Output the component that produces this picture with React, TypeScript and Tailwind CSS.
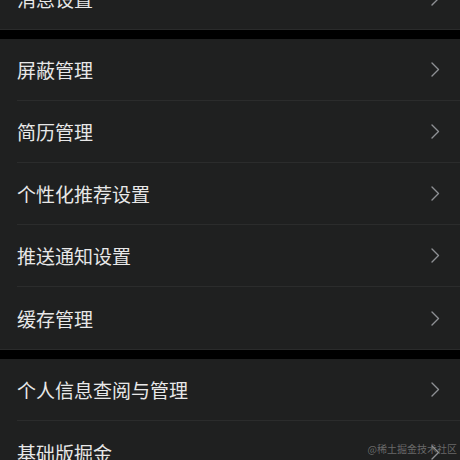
const sections: string[][] = [
  ["消息设置"],
  ["屏蔽管理", "简历管理", "个性化推荐设置", "推送通知设置", "缓存管理"],
  ["个人信息查阅与管理", "基础版掘金"],
];

function Chevron() {
  return (
    <svg width="9" height="15" viewBox="0 0 9 15" fill="none" className="text-[#8e9094]">
      <polyline
        points="1,1 7.5,7.5 1,14"
        stroke="currentColor"
        strokeWidth="1.4"
        strokeLinecap="round"
        strokeLinejoin="round"
      />
    </svg>
  );
}

function Row({ label, last }: { label: string; last: boolean }) {
  return (
    <div className="flex h-[62px] items-stretch pl-[17px]">
      <div
        className={
          "flex flex-1 items-center justify-between pr-[20px] " +
          (last ? "" : "border-b border-[#2b2c2c]")
        }
      >
        <span className="text-[19px] leading-none text-[#e8e8e8]">{label}</span>
        <Chevron />
      </div>
    </div>
  );
}

export default function App() {
  return (
    <div
      className="relative h-[460px] w-[460px] overflow-hidden bg-black"
      style={{ fontFamily: '"Noto Sans CJK SC", "Noto Sans", sans-serif' }}
    >
      <div className="-mt-[33px] flex flex-col gap-[9px]">
        {sections.map((rows, i) => (
          <div key={i} className="border-b border-[#2a2b2b] bg-[#1f2020]">
            {rows.map((r, j) => (
              <Row key={r} label={r} last={j === rows.length - 1} />
            ))}
          </div>
        ))}
      </div>

      {/* watermark */}
      <span className="absolute bottom-[6px] right-[3px] text-[10px] leading-none text-[#8a8a8a]/70">
        @稀土掘金技术社区
      </span>
    </div>
  );
}
